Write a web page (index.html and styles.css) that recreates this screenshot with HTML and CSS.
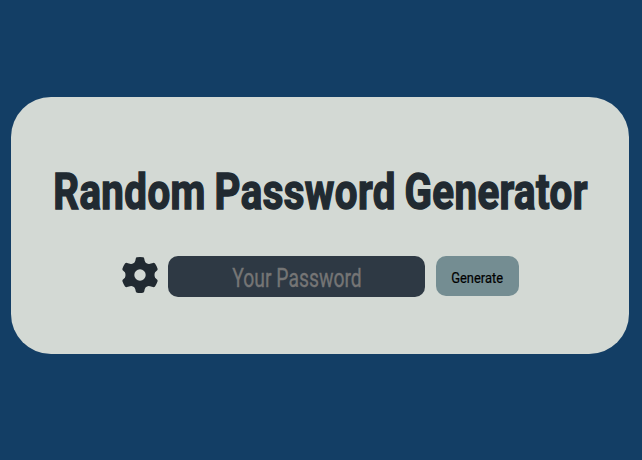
FILE: index.html
```
<!DOCTYPE html>
<html lang="en">
<head>
<meta charset="utf-8">
<title>Random Password Generator</title>
<link rel="stylesheet" href="styles.css">
</head>
<body>
<main class="card">
  <h1 class="title">Random Password Generator</h1>
  <div class="controls">
    <svg class="gear" viewBox="0 0 36 36" aria-label="Settings"><path fill-rule="evenodd" d="M15 .3Q18-.2 21 .3Q22 .4 22.200 1.500L22.700 3.800Q23.200 5.800 25 6.600Q26.400 7.300 28 6.800L31 5.900Q32.200 5.600 33 6.600Q34.600 8.900 35.500 11.500Q35.900 12.700 35 13.500L33.100 15.300Q31.900 18 33.100 20.700L35 22.500Q35.900 23.300 35.500 24.500Q34.600 27.100 33 29.400Q32.200 30.400 31 30.100L28 29.200Q26.400 28.700 25 29.400Q23.200 30.200 22.700 32.200L22.200 34.500Q22 35.600 21 35.700Q18 36.200 15 35.700Q14 35.600 13.800 34.500L13.300 32.200Q12.800 30.200 11 29.400Q9.600 28.700 8 29.200L5 30.100Q3.800 30.400 3 29.400Q1.400 27.100 .5 24.500Q.1 23.300 1 22.500L2.900 20.700Q4.100 18 2.900 15.300L1 13.500Q.1 12.700 .5 11.500Q1.400 8.900 3 6.600Q3.800 5.600 5 5.900L8 6.800Q9.600 7.300 11 6.600Q12.800 5.800 13.300 3.800L13.800 1.500Q14 .4 15 .3ZM18 12.300a5.700 5.700 0 1 0 0 11.400a5.700 5.700 0 1 0 0-11.400Z"/></svg>
    <div class="field"><input class="password" type="text" placeholder="Your Password"></div>
    <button class="generate" type="button"><span class="label">Generate</span></button>
  </div>
</main>
</body>
</html>
```
FILE: styles.css
```
* {
  box-sizing: border-box;
}

body {
  margin: 0;
  padding: 97px 13px 0 11px;
  height: 460px;
  overflow: hidden;
  background: #133e65;
  font-family: Roboto, sans-serif;
}

.card {
  height: 257px;
  padding-top: 65px;
  border-radius: 40px;
  background: #d3d9d4;
}

.title {
  margin: 0;
  height: 60px;
  display: flex;
  justify-content: center;
  white-space: nowrap;
  font-size: 50px;
  line-height: 61px;
  font-weight: 700;
  letter-spacing: .5px;
  word-spacing: -2px;
  color: #212a31;
  -webkit-text-stroke: 1.5px #212a31;
  transform: translateX(.5px) scaleX(.805);
}

.controls {
  display: flex;
  align-items: flex-start;
  margin: 34px 0 0 111px;
}

.gear {
  width: 36px;
  height: 36px;
  margin: 1px 10px 0 0;
  fill: #212a31;
}

.field {
  width: 257px;
  height: 41px;
  margin-right: 11px;
  border-radius: 10px;
  background: #2e3944;
}

.password {
  display: block;
  width: 100%;
  height: 41px;
  padding: 4px 0 0;
  border: 0;
  outline: 0;
  background: transparent;
  color: #d3d9d4;
  font: 400 25.3px Roboto, sans-serif;
  text-align: center;
  transform: translateX(.5px) scaleX(.765);
}

.password::placeholder {
  color: #757575;
  -webkit-text-stroke: .35px #757575;
}

.generate {
  width: 83px;
  height: 40px;
  padding: 3px 0 0;
  border: 0;
  border-radius: 10px;
  background: #748d92;
  color: #000;
  font: 400 15px Roboto, sans-serif;
}

.label {
  display: inline-block;
  -webkit-text-stroke: .2px #000;
  transform: scaleX(.86);
}
```
